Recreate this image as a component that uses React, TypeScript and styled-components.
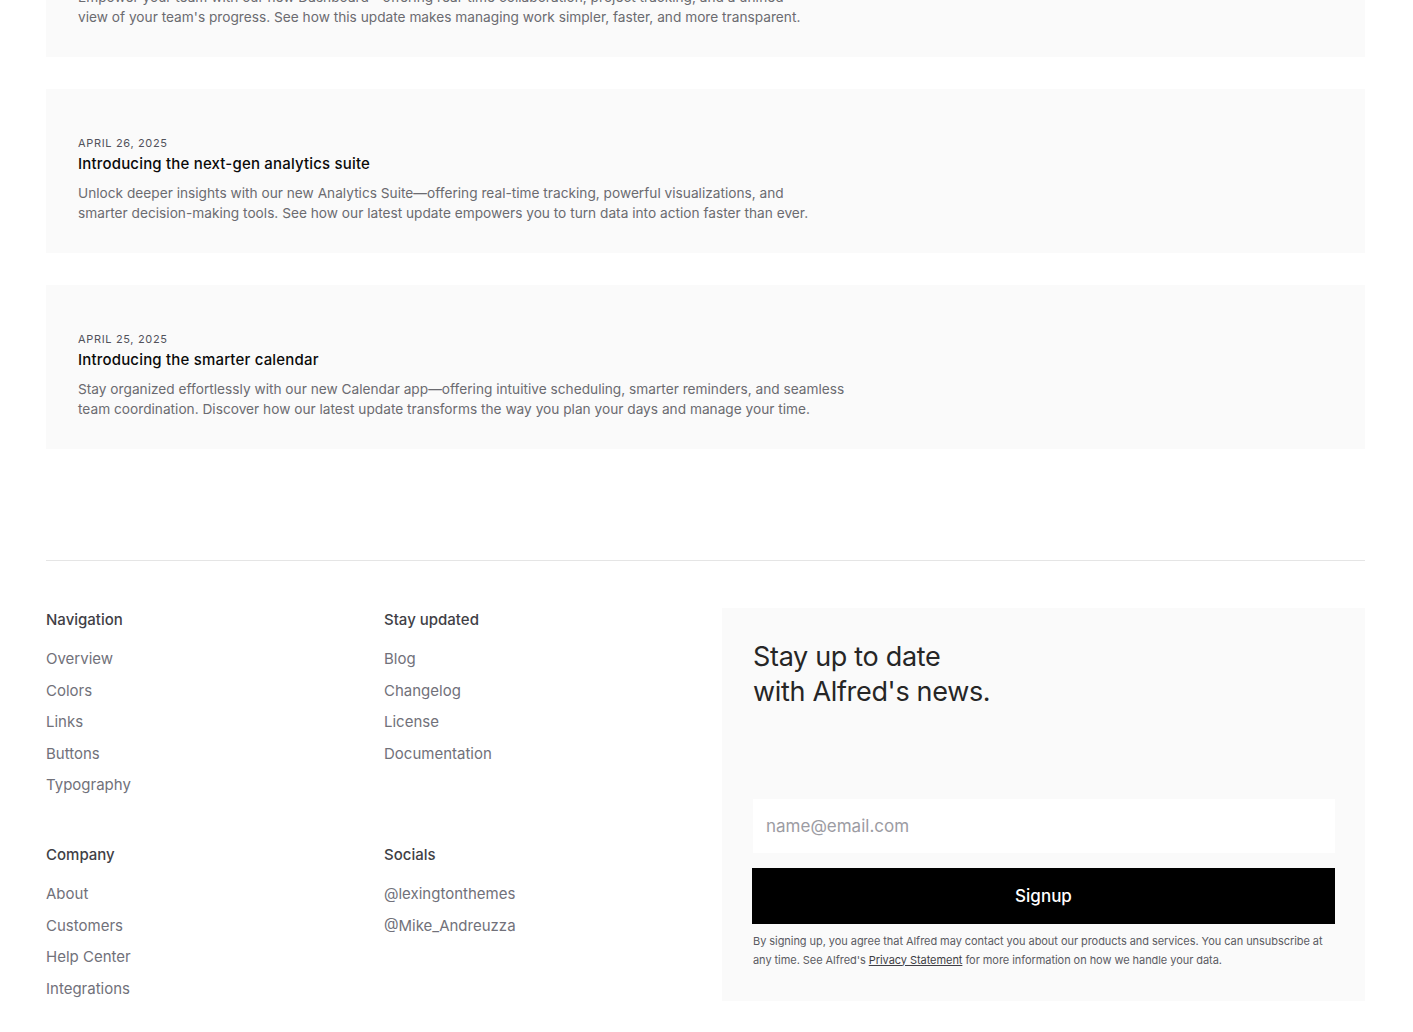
import React from "react";
import styled, { createGlobalStyle } from "styled-components";

const Global = createGlobalStyle`
  html, body { margin: 0; padding: 0; background: #ffffff; }
  body { font-family: Inter, "Noto Sans", sans-serif; -webkit-font-smoothing: antialiased; overflow: hidden; }
  * { box-sizing: border-box; }
`;

const Page = styled.div`
  width: 1413px;
  padding: 0 48px 0 46px;
  margin-top: -107px;
`;

const PostList = styled.section`
  display: flex;
  flex-direction: column;
  gap: 32px;
`;

const Card = styled.article`
  background: #fafafa;
  height: 164px;
  padding: 46px 32px 30px;
  display: flex;
  flex-direction: column;
`;

const DateLabel = styled.div`
  font-size: 11px;
  line-height: 16px;
  letter-spacing: 0.06em;
  text-transform: uppercase;
  color: #52525b;
`;

const Title = styled.h3`
  margin: 2px 0 0;
  font-size: 15px;
  line-height: 22px;
  font-weight: 500;
  letter-spacing: 0.012em;
  color: #0a0a0a;
`;

const Desc = styled.p`
  margin: 8px 0 0;
  font-size: 13.7px;
  line-height: 20px;
  color: #6b6b70;
  white-space: nowrap;
`;

const Divider = styled.hr`
  margin: 111px 0 47px;
  border: none;
  border-top: 1px solid #e5e5e5;
`;

const Footer = styled.footer`
  display: grid;
  grid-template-columns: 338px 338px 1fr;
  grid-template-rows: auto auto;
  row-gap: 46px;
`;

const Group = styled.div<{ $col: number; $row: number }>`
  grid-column: ${(p) => p.$col};
  grid-row: ${(p) => p.$row};
  display: flex;
  flex-direction: column;
`;

const GroupTitle = styled.h4`
  margin: 0 0 15px;
  font-size: 15px;
  line-height: 24px;
  font-weight: 500;
  color: #3f3f46;
`;

const LinkList = styled.ul`
  list-style: none;
  margin: 0;
  padding: 0;
  display: flex;
  flex-direction: column;
  gap: 7.5px;
`;

const FootLink = styled.a`
  font-size: 15px;
  line-height: 24px;
  color: #71717a;
  text-decoration: none;
`;

const Newsletter = styled.div`
  grid-column: 3;
  grid-row: 1 / span 2;
  background: #fafafa;
  padding: 31px 30px 31px 31px;
  display: flex;
  flex-direction: column;
  justify-content: space-between;
`;

const NewsHeading = styled.h2`
  margin: 0;
  font-size: 27px;
  line-height: 35px;
  font-weight: 400;
  color: #262626;
  letter-spacing: -0.012em;
`;

const Form = styled.form`
  display: flex;
  flex-direction: column;
`;

const EmailInput = styled.input`
  height: 54px;
  border: none;
  background: #ffffff;
  padding: 0 13px;
  font-family: inherit;
  font-size: 17px;
  color: #27272a;
  outline: none;
  &::placeholder { color: #9c9ca3; }
`;

const SignupButton = styled.button`
  margin: 15px 0 0 -1px;
  height: 56px;
  border: none;
  background: #000000;
  color: #ffffff;
  font-family: inherit;
  font-size: 17px;
  font-weight: 500;
  cursor: pointer;
`;

const FinePrint = styled.p`
  margin: 8px 0 0;
  font-size: 11px;
  line-height: 19px;
  color: #5b5b62;
  letter-spacing: -0.005em;
  white-space: nowrap;
`;

const Underlined = styled.a`
  color: #3f3f46;
  text-decoration: underline;
`;

const posts = [
  {
    date: "April 27, 2025",
    title: "Introducing the new dashboard",
    lines: [
      "Empower your team with our new Dashboard—offering real-time collaboration, project tracking, and a unified",
      "view of your team's progress. See how this update makes managing work simpler, faster, and more transparent.",
    ],
  },
  {
    date: "April 26, 2025",
    title: "Introducing the next-gen analytics suite",
    lines: [
      "Unlock deeper insights with our new Analytics Suite—offering real-time tracking, powerful visualizations, and",
      "smarter decision-making tools. See how our latest update empowers you to turn data into action faster than ever.",
    ],
  },
  {
    date: "April 25, 2025",
    title: "Introducing the smarter calendar",
    lines: [
      "Stay organized effortlessly with our new Calendar app—offering intuitive scheduling, smarter reminders, and seamless",
      "team coordination. Discover how our latest update transforms the way you plan your days and manage your time.",
    ],
  },
];

const groups = [
  { title: "Navigation", links: ["Overview", "Colors", "Links", "Buttons", "Typography"] },
  { title: "Stay updated", links: ["Blog", "Changelog", "License", "Documentation"] },
  { title: "Company", links: ["About", "Customers", "Help Center", "Integrations"] },
  { title: "Socials", links: ["@lexingtonthemes", "@Mike_Andreuzza"] },
];

export default function App() {
  return (
    <>
      <Global />
      <Page>
        <PostList>
          {posts.map((p) => (
            <Card key={p.title}>
              <DateLabel>{p.date}</DateLabel>
              <Title>{p.title}</Title>
              <Desc>
                {p.lines[0]}
                <br />
                {p.lines[1]}
              </Desc>
            </Card>
          ))}
        </PostList>
        <Divider />
        <Footer>
          {groups.map((g, i) => (
            <Group key={g.title} $col={(i % 2) + 1} $row={Math.floor(i / 2) + 1}>
              <GroupTitle>{g.title}</GroupTitle>
              <LinkList>
                {g.links.map((l) => (
                  <li key={l}>
                    <FootLink href="#">{l}</FootLink>
                  </li>
                ))}
              </LinkList>
            </Group>
          ))}
          <Newsletter>
            <NewsHeading>
              Stay up to date
              <br />
              with Alfred's news.
            </NewsHeading>
            <Form onSubmit={(e) => e.preventDefault()}>
              <EmailInput type="email" placeholder="name@email.com" />
              <SignupButton type="submit">Signup</SignupButton>
              <FinePrint>
                By signing up, you agree that Alfred may contact you about our products and services. You can unsubscribe at
                <br />
                any time. See Alfred's <Underlined href="#">Privacy Statement</Underlined> for more information on how we handle your data.
              </FinePrint>
            </Form>
          </Newsletter>
        </Footer>
      </Page>
    </>
  );
}
